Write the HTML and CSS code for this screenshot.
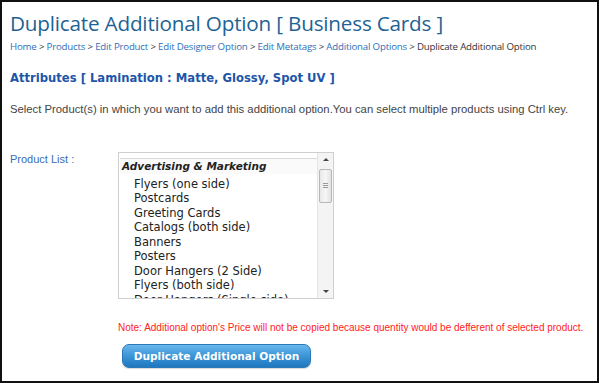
FILE: index.html
```html
<!DOCTYPE html>
<html>
<head>
<meta charset="utf-8">
<link rel="stylesheet" href="styles.css">
</head>
<body>
<div class="frame">
  <h1 class="title">Duplicate Additional Option [ Business Cards ]</h1>
  <div class="crumbs">
    <a>Home</a> &gt; <a>Products</a> &gt; <a>Edit Product</a> &gt; <a>Edit Designer Option</a> &gt; <a>Edit Metatags</a> &gt; <a>Additional Options</a> &gt; <span class="cur">Duplicate Additional Option</span>
  </div>
  <h2 class="attr">Attributes [ Lamination : Matte, Glossy, Spot UV ]</h2>
  <p class="desc">Select Product(s) in which you want to add this additional option.You can select multiple products using Ctrl key.</p>
  <div class="form-row">
    <div class="label">Product List :</div>
    <div class="listbox">
      <div class="list-items">
        <div class="group">Advertising &amp; Marketing</div>
        <div class="opt">Flyers (one side)</div>
        <div class="opt">Postcards</div>
        <div class="opt">Greeting Cards</div>
        <div class="opt">Catalogs (both side)</div>
        <div class="opt">Banners</div>
        <div class="opt">Posters</div>
        <div class="opt">Door Hangers (2 Side)</div>
        <div class="opt">Flyers (both side)</div>
        <div class="opt">Door Hangers (Single side)</div>
      </div>
      <div class="scrollbar">
        <div class="arrow up"></div>
        <div class="track"><div class="thumb"><span class="grip"></span></div></div>
        <div class="arrow down"></div>
      </div>
    </div>
  </div>
  <div class="actions">
    <p class="note">Note: Additional option's Price will not be copied because quentity would be defferent of selected product.</p>
    <button class="btn">Duplicate Additional Option</button>
  </div>
</div>
</body>
</html>
```
FILE: styles.css
```css
html, body { margin: 0; padding: 0; background: #fff; }
.frame {
  width: 599px; height: 383px; box-sizing: border-box;
  border: 2px solid #111;
  padding: 7px 8px 0 8px; overflow: hidden;
}
.title {
  margin: 0; font-family: "Open Sans", sans-serif; font-weight: 400;
  font-size: 20.7px; line-height: 28px; color: #1e6393; letter-spacing: -0.2px;
}
.crumbs {
  margin-top: 3px; font-family: "Open Sans", sans-serif; font-size: 9.7px;
  line-height: 14px; color: #333; letter-spacing: -0.2px;
}
.crumbs a { color: #2f6fb7; }
.crumbs .cur { color: #333; }
.attr {
  margin: 17px 0 0 0; font-family: "DejaVu Sans", Verdana, sans-serif; font-weight: bold;
  font-size: 11.6px; line-height: 14px; color: #1d55a8;
}
.desc {
  margin: 17px 0 0 0; font-family: "Liberation Sans", Arial, sans-serif; font-size: 11.3px;
  line-height: 14px; color: #444;
}
.form-row { display: flex; margin-top: 36px; }
.label {
  width: 108px; font-family: "Liberation Sans", Arial, sans-serif; font-size: 11px;
  line-height: 14px; color: #3b6db0; padding-top: 0;
}
.listbox {
  width: 216px; height: 147px; box-sizing: border-box; border: 1px solid #cfcfcf;
  display: flex; overflow: hidden; background: #fff;
}
.list-items { flex: 1; padding-top: 5px; font-family: "DejaVu Sans", Verdana, sans-serif; font-size: 11.5px; color: #222; }
.group {
  font-weight: bold; font-style: italic; font-size: 10.5px; line-height: 14.5px; padding-left: 2px;
  border-top: 1px solid #d8d8d8; background: #fafafa; margin-left: 1px; margin-bottom: 3px;
}
.opt { line-height: 14.5px; padding-left: 15px; white-space: nowrap; }
.scrollbar {
  width: 15px; display: flex; flex-direction: column; background: #f4f4f4;
  border-left: 1px solid #e6e6e6;
}
.arrow { height: 14px; position: relative; }
.arrow::after {
  content: ""; position: absolute; left: 5px; width: 0; height: 0;
  border-left: 3px solid transparent; border-right: 3px solid transparent;
}
.arrow.up::after { top: 5px; border-bottom: 3px solid #444; }
.arrow.down::after { top: 6px; border-top: 3px solid #444; }
.track { flex: 1; padding: 2px 1px 0 1px; }
.thumb {
  height: 32px; border: 1px solid #b8b8b8; border-radius: 2px;
  background: linear-gradient(to right, #e8e8e8, #f6f6f6 50%, #e2e2e2);
  display: flex; align-items: center; justify-content: center;
}
.grip {
  width: 5px; height: 6px;
  background: repeating-linear-gradient(to bottom, #999 0 1px, transparent 1px 2px);
}
.actions { padding-left: 108px; }
.note {
  margin: 23px 0 0 0; font-family: "Liberation Sans", Arial, sans-serif; font-size: 10px;
  line-height: 12px; color: #f22; white-space: nowrap;
}
.btn {
  display: block;
  margin: 10px 0 0 4px; width: 189px; height: 24px; border: 1px solid #2a78b8; border-radius: 7px;
  background: linear-gradient(to bottom, #6ab7ec 0%, #3b95d6 50%, #1f77bf 100%);
  color: #fff; font-family: "DejaVu Sans", Verdana, sans-serif; font-weight: bold; font-size: 10.6px;
  padding: 0; box-shadow: 0 1px 1px rgba(0,0,0,0.15);
}
```
